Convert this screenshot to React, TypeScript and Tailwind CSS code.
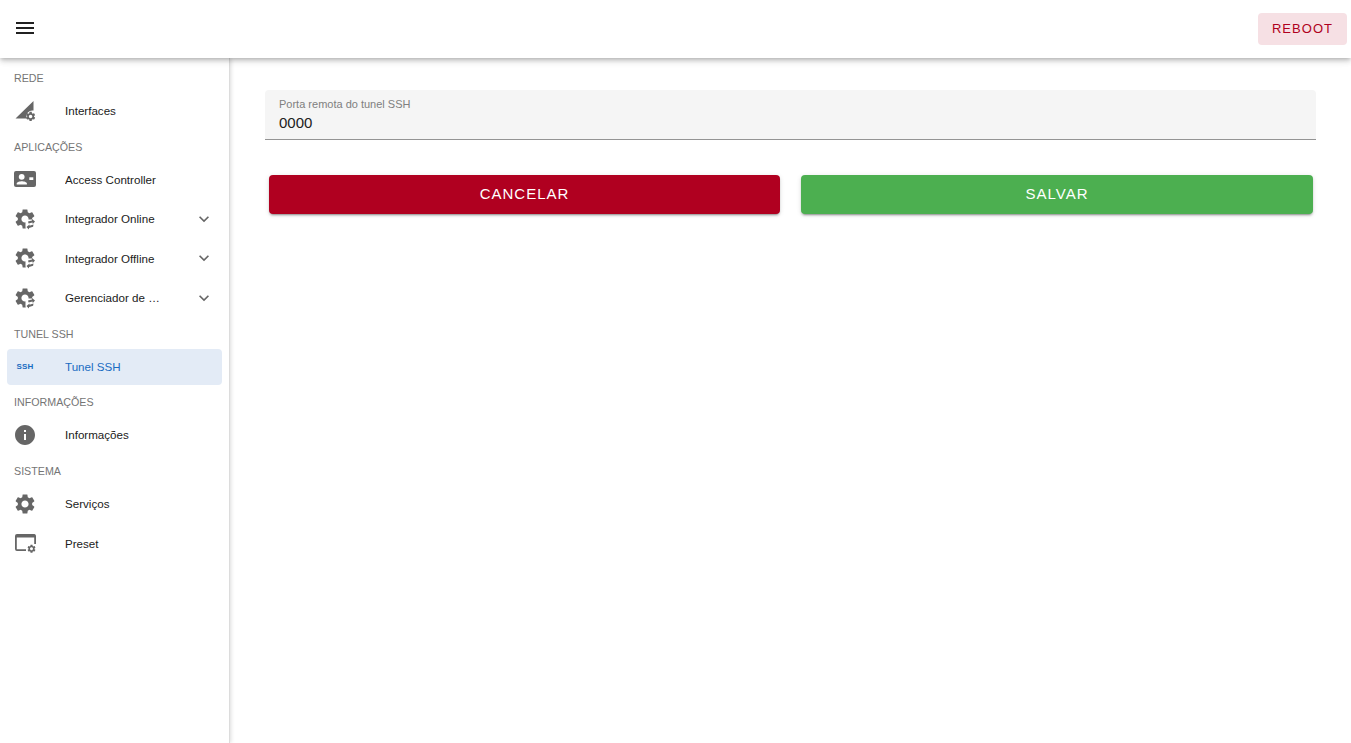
const gear =
  "M19.14,12.94c0.04-0.3,0.06-0.61,0.06-0.94c0-0.32-0.02-0.64-0.07-0.94l2.03-1.58c0.18-0.14,0.23-0.41,0.12-0.61l-1.92-3.32c-0.12-0.22-0.37-0.29-0.59-0.22l-2.39,0.96c-0.5-0.38-1.03-0.7-1.62-0.94L14.4,2.81c-0.04-0.24-0.24-0.41-0.48-0.41h-3.84c-0.24,0-0.43,0.17-0.47,0.41L9.25,5.35C8.66,5.59,8.12,5.92,7.63,6.29L5.24,5.33c-0.22-0.08-0.47,0-0.59,0.22L2.74,8.87C2.62,9.08,2.66,9.34,2.86,9.48l2.03,1.58C4.84,11.36,4.8,11.69,4.8,12s0.02,0.64,0.07,0.94l-2.03,1.58c-0.18,0.14-0.23,0.41-0.12,0.61l1.92,3.32c0.12,0.22,0.37,0.29,0.59,0.22l2.39-0.96c0.5,0.38,1.03,0.7,1.62,0.94l0.36,2.54c0.05,0.24,0.24,0.41,0.48,0.41h3.84c0.24,0,0.44-0.17,0.47-0.41l0.36-2.54c0.59-0.24,1.13-0.56,1.62-0.94l2.39,0.96c0.22,0.08,0.47,0,0.59-0.22l1.92-3.32c0.12-0.22,0.07-0.47-0.12-0.61L19.14,12.94z M12,15.6c-1.98,0-3.6-1.62-3.6-3.6s1.62-3.6,3.6-3.6s3.6,1.62,3.6,3.6S13.98,15.6,12,15.6z";

const SmallGear = ({ x, y, size }: { x: number; y: number; size: number }) => (
  <g transform={`translate(${x - size / 2} ${y - size / 2}) scale(${size / 24})`}>
    <path d={gear} />
  </g>
);

const Icon = ({ children }: { children: React.ReactNode }) => (
  <svg viewBox="0 0 24 24" className="w-6 h-6 shrink-0 fill-[#666666]">
    {children}
  </svg>
);

const SignalCog = () => (
  <Icon>
    <path d="M2.5 19.5 20.5 2v9.500a6 6 0 0 0-6.700 8z" />
    <SmallGear x={17.6} y={17.4} size={11.5} />
  </Icon>
);

const ContactCard = () => (
  <Icon>
    <path d="M3 3h18a2 2 0 0 1 2 2v12a2 2 0 0 1-2 2H3a2 2 0 0 1-2-2V5a2 2 0 0 1 2-2z" />
    <circle cx="8.7" cy="8.8" r="2.9" fill="#fff" />
    <path d="M3.7 16.5v-1c0-1.5 3.4-2.3 5.1-2.3s5.1.8 5.1 2.3v1z" fill="#fff" />
    <rect x="16.3" y="9.3" width="4" height="2.7" fill="#fff" />
  </Icon>
);

const CogTransfer = () => (
  <Icon>
    <path d={gear} />
    <path d="M12.5 20V15l2-2.5H24V24H13z" fill="#fff" />
    <path d="M15 14.6l4-1.2v-1.4l3 2.4-2.2 2.7-.3-1.6-3.9 1.1z" />
    <path d="M20.5 17.6l-4 1.2v-1.4l-3 2.6 2.3 2.5.3-1.5 4-1.2z" />
  </Icon>
);

const Ssh = () => (
  <span className="w-6 h-6 shrink-0 flex items-center justify-center text-[8px] leading-none font-black tracking-[0.2px] text-[#1a6bc2]">
    SSH
  </span>
);

const Info = () => (
  <Icon>
    <path d="M12 2C6.48 2 2 6.48 2 12s4.48 10 10 10 10-4.48 10-10S17.52 2 12 2zm1 15h-2v-6h2v6zm0-8h-2V7h2v2z" />
  </Icon>
);

const Cog = () => (
  <Icon>
    <path d={gear} />
  </Icon>
);

const AppCog = () => (
  <Icon>
    <path d="M4 3h17.500a2 2 0 0 1 1.500 2v8h-1.800V6.500H3.800V18.200H13V20H4a2 2 0 0 1-2-2V5a2 2 0 0 1 2-2z" />
    <SmallGear x={18.5} y={17.8} size={10} />
  </Icon>
);

const Chevron = () => (
  <svg viewBox="0 0 24 24" className="w-5 h-5 shrink-0 fill-[#666666]">
    <path d="M16.59 8.59 12 13.17 7.41 8.59 6 10l6 6 6-6z" />
  </svg>
);

type Item = { label: string; icon: React.ReactNode; expand?: boolean; active?: boolean };

const groups: { title: string; items: Item[]; className?: string }[] = [
  { title: "REDE", items: [{ label: "Interfaces", icon: <SignalCog /> }] },
  {
    title: "APLICAÇÕES",
    items: [
      { label: "Access Controller", icon: <ContactCard /> },
      { label: "Integrador Online", icon: <CogTransfer />, expand: true },
      { label: "Integrador Offline", icon: <CogTransfer />, expand: true },
      { label: "Gerenciador de Serviços", icon: <CogTransfer />, expand: true },
    ],
  },
  { title: "TUNEL SSH", className: "mb-[-0.3px]", items: [{ label: "Tunel SSH", icon: <Ssh />, active: true }] },
  { title: "INFORMAÇÕES", items: [{ label: "Informações", icon: <Info /> }] },
  {
    title: "SISTEMA",
    items: [
      { label: "Serviços", icon: <Cog /> },
      { label: "Preset", icon: <AppCog /> },
    ],
  },
];

const NavItem = ({ item }: { item: Item }) => (
  <div
    className={`h-9 mx-[7px] pl-[6px] pr-[8px] flex items-center rounded ${
      item.active ? "bg-[#e3ebf6] text-[#1a6bc2]" : "text-[#212121]"
    }`}
  >
    {item.icon}
    <span className="ml-[28px] w-[97px] truncate text-[11.6px]">{item.label}</span>
    {item.expand && <span className="ml-auto"><Chevron /></span>}
  </div>
);

export default function App() {
  return (
    <div className="h-screen flex flex-col overflow-hidden bg-white font-['Liberation_Sans',Arial,sans-serif]">
      <header className="relative z-10 h-[58px] shrink-0 flex items-center justify-between pl-[13px] pr-[4px] bg-white shadow-[0_2px_4px_-1px_rgba(0,0,0,0.2),0_4px_5px_0_rgba(0,0,0,0.1),0_1px_10px_0_rgba(0,0,0,0.08)]">
        <svg viewBox="0 0 24 24" className="w-6 h-6 mb-[2px] fill-[#212121]">
          <path d="M3 18h18v-2H3v2zm0-5h18v-2H3v2zm0-7v2h18V6H3z" />
        </svg>
        <button className="h-8 w-[89px] rounded bg-[#f6e0e4] text-[#b00020] text-[13px] tracking-[1.05px]">
          REBOOT
        </button>
      </header>
      <div className="flex flex-1 min-h-0">
        <aside className="w-[230px] shrink-0 pt-2 bg-white border-r border-[#dcdcdc] shadow-[1px_0_4px_rgba(0,0,0,0.14)] flex flex-col gap-[5.8px]">
          {groups.map((group) => (
            <div key={group.title} className={`flex flex-col ${group.className ?? ""}`}>
              <div className="h-6 pl-[14px] mb-[3px] flex items-center text-[10.7px] text-[#757575]">
                {group.title}
              </div>
              <div className="flex flex-col gap-[3.33px]">
                {group.items.map((item) => (
                  <NavItem key={item.label} item={item} />
                ))}
              </div>
            </div>
          ))}
        </aside>
        <main className="flex-1 pt-8 pl-[35px] pr-[35px]">
          <div className="h-[50px] px-[14px] pt-[7px] bg-[#f5f5f5] rounded-t border-b border-[#949494]">
            <div className="text-[11px] leading-[14px] text-[#808080]">Porta remota do tunel SSH</div>
            <div className="mt-[3px] text-[15px] leading-[18px] text-[#212121]">0000</div>
          </div>
          <div className="mt-[35px] ml-[4px] mr-[3px] grid grid-cols-[511px_1fr] gap-[21px]">
            <button className="h-[39px] rounded bg-[#b00020] text-white text-[15px] tracking-[1px] shadow-[0_3px_1px_-2px_rgba(0,0,0,0.2),0_2px_2px_0_rgba(0,0,0,0.14),0_1px_5px_0_rgba(0,0,0,0.12)]">
              CANCELAR
            </button>
            <button className="h-[39px] rounded bg-[#4caf50] text-white text-[15px] tracking-[1px] shadow-[0_3px_1px_-2px_rgba(0,0,0,0.2),0_2px_2px_0_rgba(0,0,0,0.14),0_1px_5px_0_rgba(0,0,0,0.12)]">
              SALVAR
            </button>
          </div>
        </main>
      </div>
    </div>
  );
}
